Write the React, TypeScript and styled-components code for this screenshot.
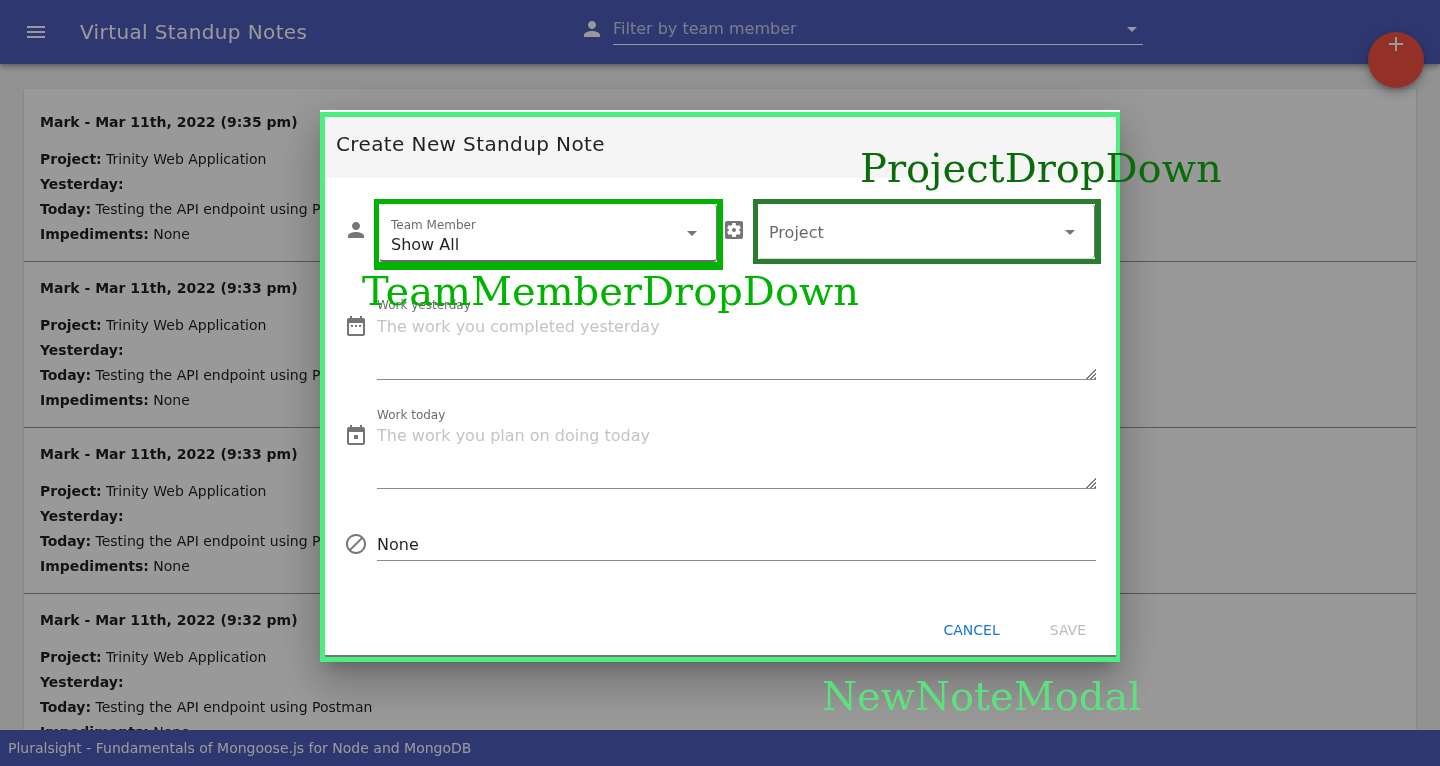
import React from "react";
import styled, { createGlobalStyle } from "styled-components";

const PATHS = {
  menu: "M3 18h18v-2H3v2zm0-5h18v-2H3v2zm0-7v2h18V6H3z",
  person:
    "M12 12c2.21 0 4-1.79 4-4s-1.79-4-4-4-4 1.79-4 4 1.79 4 4 4zm0 2c-2.67 0-8 1.34-8 4v2h16v-2c0-2.66-5.33-4-8-4z",
  arrow: "M7 10l5 5 5-5z",
  add: "M19 13h-6v6h-2v-6H5v-2h6V5h2v6h6v2z",
  dateRange:
    "M9 11H7v2h2v-2zm4 0h-2v2h2v-2zm4 0h-2v2h2v-2zm2-7h-1V2h-2v2H8V2H6v2H5c-1.11 0-1.99.9-1.99 2L3 20c0 1.1.89 2 2 2h14c1.1 0 2-.9 2-2V6c0-1.1-.9-2-2-2zm0 16H5V9h14v11z",
  today:
    "M19 4h-1V2h-2v2H8V2H6v2H5c-1.11 0-1.99.9-1.99 2L3 20c0 1.1.89 2 2 2h14c1.1 0 2-.9 2-2V6c0-1.1-.9-2-2-2zm0 16H5V9h14v11zM10 12h4v4h-4z",
  block:
    "M12 2C6.48 2 2 6.48 2 12s4.48 10 10 10 10-4.48 10-10S17.52 2 12 2zM4 12c0-4.42 3.58-8 8-8 1.85 0 3.55.63 4.9 1.69L5.69 16.9C4.63 15.55 4 13.85 4 12zm8 8c-1.85 0-3.55-.63-4.9-1.69L18.31 7.1C19.37 8.45 20 10.15 20 12c0 4.42-3.58 8-8 8z",
  settings:
    "M12 10c-1.1 0-2 .9-2 2s.9 2 2 2 2-.9 2-2-.9-2-2-2zm7-7H5c-1.11 0-2 .9-2 2v14c0 1.1.89 2 2 2h14c1.11 0 2-.9 2-2V5c0-1.1-.89-2-2-2zm-1.75 9c0 .23-.02.46-.05.68l1.48 1.16c.13.11.17.3.08.45l-1.4 2.42c-.09.15-.27.21-.43.15l-1.74-.7c-.36.28-.76.51-1.18.69l-.26 1.85c-.03.17-.18.3-.35.3h-2.8c-.17 0-.32-.13-.35-.29l-.26-1.85c-.43-.18-.82-.41-1.18-.69l-1.74.7c-.16.06-.34 0-.43-.15l-1.4-2.42c-.09-.15-.05-.34.08-.45l1.48-1.16c-.03-.23-.05-.46-.05-.69 0-.23.02-.46.05-.68l-1.48-1.16c-.13-.11-.17-.3-.08-.45l1.4-2.42c.09-.15.27-.21.43-.15l1.74.7c.36-.28.76-.51 1.18-.69l.26-1.85c.03-.17.18-.3.35-.3h2.8c.17 0 .32.13.35.29l.26 1.85c.43.18.82.41 1.18.69l1.74-.7c.16-.06.34 0 .43.15l1.4 2.42c.09.15.05.34-.08.45l-1.48 1.16c.03.23.05.46.05.69z",
};

const NOTES = [
  { time: "9:35 pm", today: "Testing the API endpoint using Postman" },
  { time: "9:33 pm", today: "Testing the API endpoint using Postman" },
  { time: "9:33 pm", today: "Testing the API endpoint using Postman" },
  { time: "9:32 pm", today: "Testing the API endpoint using Postman" },
];

const Icon = ({ name, size = 24, color = "currentColor" }: { name: keyof typeof PATHS; size?: number; color?: string }) => (
  <svg width={size} height={size} viewBox="0 0 24 24" fill={color} style={{ display: "block", flex: "none" }}>
    <path d={PATHS[name]} />
  </svg>
);

const App: React.FC = () => (
  <>
    <GlobalStyle />
    <Page>
      <AppBar>
        <MenuButton>
          <Icon name="menu" />
        </MenuButton>
        <AppTitle>Virtual Standup Notes</AppTitle>
        <FilterBox>
          <Icon name="person" />
          <FilterField>
            <FilterInput placeholder="Filter by team member" readOnly />
            <Icon name="arrow" />
          </FilterField>
        </FilterBox>
      </AppBar>
      <Fab>
        <Icon name="add" />
      </Fab>
      <Main>
        <NoteList>
          {NOTES.map((note, index) => (
            <NoteCard key={index}>
              <NoteTitle>Mark - Mar 11th, 2022 ({note.time})</NoteTitle>
              <NoteLine><b>Project:</b> Trinity Web Application</NoteLine>
              <NoteLine><b>Yesterday:</b></NoteLine>
              <NoteLine><b>Today:</b> {note.today}</NoteLine>
              <NoteLine><b>Impediments:</b> None</NoteLine>
            </NoteCard>
          ))}
        </NoteList>
      </Main>
      <Footer>Pluralsight - Fundamentals of Mongoose.js for Node and MongoDB</Footer>

      <Backdrop>
        <Dialog>
          <DialogInner>
            <DialogTitle>Create New Standup Note</DialogTitle>
            <DialogBody>
              <SelectRow>
                <IconSlot $top={19}>
                  <Icon name="person" color="#757575" />
                </IconSlot>
                <TeamOutline>
                  <SelectBox $height={58} $left={11} $strong>
                    <SelectText>
                      <SmallLabel>Team Member</SmallLabel>
                      <SelectValue>Show All</SelectValue>
                    </SelectText>
                    <Icon name="arrow" color="#757575" />
                  </SelectBox>
                </TeamOutline>
                <GearSlot>
                  <Icon name="settings" color="#757575" />
                </GearSlot>
                <ProjectOutline>
                  <SelectBox $height={55} $left={10}>
                    <SelectPlaceholder>Project</SelectPlaceholder>
                    <Icon name="arrow" color="#757575" />
                  </SelectBox>
                </ProjectOutline>
              </SelectRow>

              <FieldRow $gap={28}>
                <IconSlot $top={16}>
                  <Icon name="dateRange" color="#757575" />
                </IconSlot>
                <Field>
                  <FieldLabel>Work yesterday</FieldLabel>
                  <FieldArea $top={1} placeholder="The work you completed yesterday" readOnly />
                </Field>
              </FieldRow>

              <FieldRow $gap={28}>
                <IconSlot $top={15}>
                  <Icon name="today" color="#757575" />
                </IconSlot>
                <Field>
                  <FieldLabel>Work today</FieldLabel>
                  <FieldArea $top={0} placeholder="The work you plan on doing today" readOnly />
                </Field>
              </FieldRow>

              <FieldRow $gap={39}>
                <IconSlot $top={4}>
                  <Icon name="block" color="#757575" />
                </IconSlot>
                <Field>
                  <FieldInput value="None" readOnly />
                </Field>
              </FieldRow>
            </DialogBody>
            <DialogActions>
              <ActionButton $color="#1976d2">CANCEL</ActionButton>
              <ActionButton $color="#bdbdbd">SAVE</ActionButton>
            </DialogActions>
          </DialogInner>
        </Dialog>

        <Annotation $color="#00b300" $left={362} $top={266}>TeamMemberDropDown</Annotation>
        <Annotation $color="#0a6b0a" $left={860} $top={143}>ProjectDropDown</Annotation>
        <Annotation $color="#5fe07f" $left={822} $top={671}>NewNoteModal</Annotation>
      </Backdrop>
    </Page>
  </>
);

export default App;

const GlobalStyle = createGlobalStyle`
  html, body {
    margin: 0;
    padding: 0;
    height: 100%;
    overflow: hidden;
    font-family: "DejaVu Sans", sans-serif;
  }
  * {
    box-sizing: border-box;
  }
`;

const Page = styled.div`
  position: relative;
  display: flex;
  flex-direction: column;
  width: 1440px;
  height: 766px;
  overflow: hidden;
  background: #f4f4f4;
  color: rgba(0, 0, 0, 0.87);
  will-change: transform;
`;

const AppBar = styled.header`
  position: relative;
  z-index: 2;
  display: flex;
  align-items: center;
  flex: none;
  height: 64px;
  padding-left: 24px;
  background: #4e5dbb;
  color: #fff;
  box-shadow: 0 2px 4px -1px rgba(0, 0, 0, 0.2), 0 4px 5px rgba(0, 0, 0, 0.14), 0 1px 10px rgba(0, 0, 0, 0.12);
`;

const MenuButton = styled.div`
  width: 56px;
`;

const AppTitle = styled.h1`
  margin: 0;
  width: 500px;
  font-size: 20px;
  font-weight: 400;
  letter-spacing: 0.38px;
  line-height: 64px;
`;

const FilterBox = styled.div`
  display: flex;
  align-items: center;
  gap: 9px;
  margin-top: -6px;
  width: 563px;
`;

const FilterField = styled.div`
  display: flex;
  align-items: center;
  width: 530px;
  height: 32px;
  border-bottom: 1px solid #fff;
  svg {
    margin-right: -1px;
  }
`;

const FilterInput = styled.input`
  flex: 1;
  min-width: 0;
  padding: 0;
  border: 0;
  outline: 0;
  background: transparent;
  font: 400 16px "DejaVu Sans", sans-serif;
  color: #fff;
  &::placeholder {
    color: rgba(255, 255, 255, 0.7);
    opacity: 1;
  }
`;

const Fab = styled.div`
  position: absolute;
  z-index: 3;
  top: 32px;
  left: 1368px;
  display: flex;
  justify-content: center;
  width: 56px;
  height: 56px;
  border-radius: 50%;
  background: #f55344;
  color: #fff;
  box-shadow: 0 3px 5px -1px rgba(0, 0, 0, 0.2), 0 6px 10px rgba(0, 0, 0, 0.14), 0 1px 18px rgba(0, 0, 0, 0.12);
`;

const Main = styled.main`
  flex: 1;
  min-height: 0;
  overflow: hidden;
  padding: 25px 24px 0;
`;

const NoteList = styled.div`
  padding-top: 7px;
  background: #fff;
  box-shadow: 0 2px 1px -1px rgba(0, 0, 0, 0.2), 0 1px 1px rgba(0, 0, 0, 0.14), 0 1px 3px rgba(0, 0, 0, 0.12);
`;

const NoteCard = styled.article`
  height: 166px;
  padding: 16px;
  border-bottom: 1px solid rgba(0, 0, 0, 0.42);
`;

const NoteTitle = styled.div`
  margin-bottom: 15px;
  font-size: 14px;
  font-weight: 700;
  line-height: 20px;
`;

const NoteLine = styled.div`
  font-size: 14px;
  line-height: 25px;
`;

const Footer = styled.footer`
  flex: none;
  height: 36px;
  padding-left: 8px;
  background: #4e5dbb;
  color: #fff;
  font-size: 14px;
  line-height: 36px;
`;

const Backdrop = styled.div`
  position: absolute;
  z-index: 5;
  inset: 0;
  background: rgba(0, 0, 0, 0.4);
  will-change: transform;
`;

const Dialog = styled.div`
  position: absolute;
  top: 110px;
  left: 320px;
  width: 800px;
  height: 552px;
  padding-top: 2px;
  background: linear-gradient(#fff 2px, transparent 2px);
  box-shadow: 0 11px 15px -7px rgba(0, 0, 0, 0.2), 0 24px 38px 3px rgba(0, 0, 0, 0.14), 0 9px 46px 8px rgba(0, 0, 0, 0.12);
`;

const DialogInner = styled.div`
  display: flex;
  flex-direction: column;
  height: 100%;
  border: solid #4bef7f;
  border-width: 5px 4px 5px 5px;
  background: #fff;
`;

const DialogTitle = styled.h2`
  flex: none;
  height: 61px;
  margin: 0;
  padding: 0 11px;
  background: #f5f5f5;
  font-size: 20px;
  font-weight: 400;
  letter-spacing: 0.39px;
  line-height: 55px;
`;

const DialogBody = styled.div`
  flex: 1;
  padding: 21px 20px 0 19px;
`;

const SelectRow = styled.div`
  display: flex;
  align-items: flex-start;
`;

const FieldRow = styled.div<{ $gap: number }>`
  display: flex;
  align-items: flex-start;
  gap: 9px;
  margin-top: ${(props) => props.$gap}px;
`;

const IconSlot = styled.div<{ $top: number }>`
  flex: none;
  width: 24px;
  padding-top: ${(props) => props.$top}px;
`;

const TeamOutline = styled.div`
  flex: none;
  width: 349px;
  height: 71px;
  margin-left: 6px;
  border: solid #00b300;
  border-width: 5px 6px 8px 5px;
`;

const GearSlot = styled.div`
  flex: none;
  width: 24px;
  margin-left: -1px;
  padding-top: 19px;
`;

const ProjectOutline = styled.div`
  flex: none;
  width: 348px;
  margin-left: 7px;
  border: solid #2a7d2e;
  border-width: 5px 6px 5px 5px;
`;

const SelectBox = styled.div<{ $height: number; $left: number; $strong?: boolean }>`
  display: flex;
  align-items: center;
  justify-content: space-between;
  height: ${(props) => props.$height}px;
  padding: ${(props) => (props.$strong ? "0" : "1px")} 12px 0 ${(props) => props.$left}px;
  border: 1px solid transparent;
  border-right-color: #757575;
  border-bottom: ${(props) => (props.$strong ? "2px solid #6b6b6b" : "1px solid #d8d8d8")};
  border-radius: 4px;
  background: #fff;
`;

const SelectText = styled.div`
  display: flex;
  flex-direction: column;
  padding-top: 8px;
`;

const SmallLabel = styled.span`
  color: rgba(0, 0, 0, 0.6);
  font-size: 12px;
  line-height: 16px;
`;

const SelectValue = styled.span`
  font-size: 16px;
  line-height: 24px;
`;

const SelectPlaceholder = styled.span`
  color: rgba(0, 0, 0, 0.6);
  font-size: 16px;
`;

const Field = styled.div`
  flex: 1;
  min-width: 0;
`;

const FieldLabel = styled.label`
  display: block;
  color: rgba(0, 0, 0, 0.6);
  font-size: 12px;
  line-height: 14px;
`;

const FieldArea = styled.textarea<{ $top: number }>`
  display: block;
  width: 100%;
  height: 67px;
  margin: ${(props) => props.$top}px 0 0;
  padding: 4px 0 0;
  border: 0;
  border-bottom: 1px solid #8c8c8c;
  outline: 0;
  background: transparent;
  font: 400 16px/20px "DejaVu Sans", sans-serif;
  &::placeholder {
    color: #c4c4c4;
    opacity: 1;
  }
  &::-webkit-resizer {
    background:
      linear-gradient(135deg, #fff 50%, transparent 50%) right bottom / 12px 12px no-repeat,
      repeating-linear-gradient(135deg, #fff 0 1.4px, #7c7c7c 1.4px 2.8px) right bottom / 12px 12px no-repeat;
  }
`;

const FieldInput = styled.input`
  display: block;
  width: 100%;
  height: 33px;
  padding: 0;
  border: 0;
  border-bottom: 1px solid #8c8c8c;
  outline: 0;
  background: transparent;
  color: rgba(0, 0, 0, 0.87);
  font: 400 16px "DejaVu Sans", sans-serif;
`;

const DialogActions = styled.div`
  display: flex;
  justify-content: flex-end;
  gap: 30px;
  flex: none;
  height: 46px;
  padding-right: 20px;
  border-bottom: 2px solid #757575;
`;

const ActionButton = styled.div<{ $color: string }>`
  padding: 0 10px;
  color: ${(props) => props.$color};
  font-size: 14px;
  line-height: 38px;
`;

const Annotation = styled.span<{ $color: string; $left: number; $top: number }>`
  position: absolute;
  top: ${(props) => props.$top}px;
  left: ${(props) => props.$left}px;
  color: ${(props) => props.$color};
  font-family: "DejaVu Serif", serif;
  font-size: 40px;
  line-height: 50px;
  white-space: nowrap;
`;
